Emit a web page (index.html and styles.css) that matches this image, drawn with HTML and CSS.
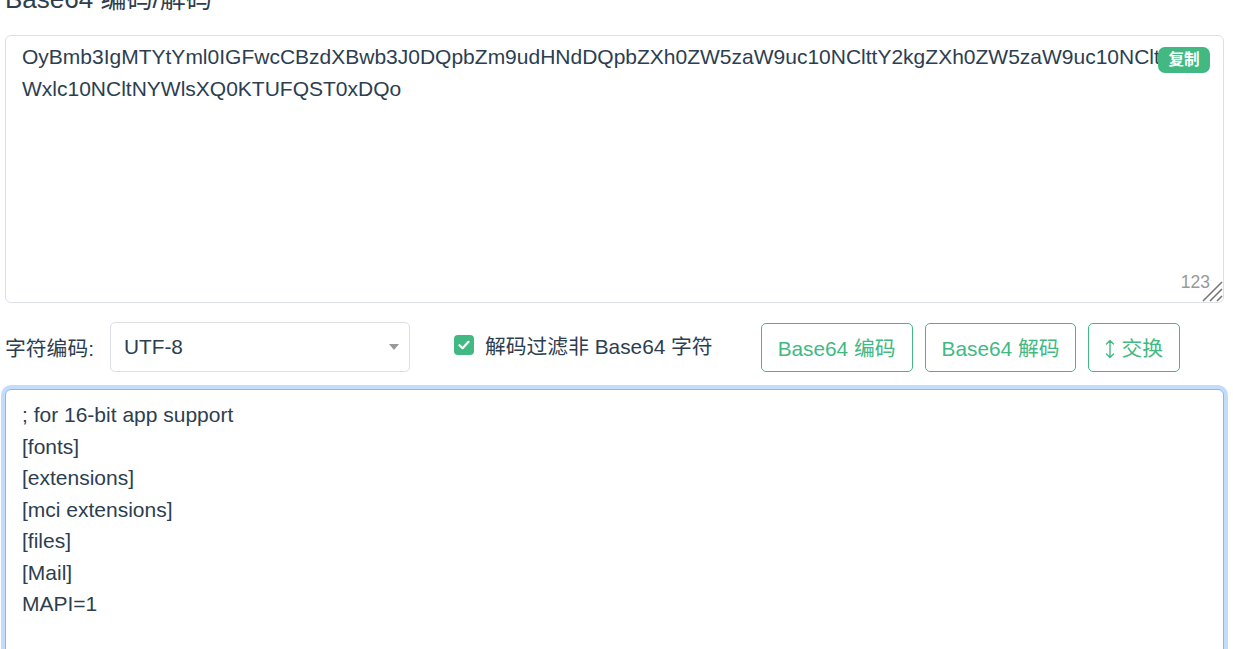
FILE: index.html
```html
<!DOCTYPE html>
<html lang="zh-CN">
<head>
    <meta charset="UTF-8">
    <meta name="viewport" content="width=device-width, initial-scale=1.0">
    <title>Base64 编码/解码</title>
    <link rel="stylesheet" href="styles.css">
</head>
<body>
    <div class="page">
        <h1 class="title">Base64 编码/解码</h1>

        <div class="box">
            <textarea class="text-in" spellcheck="false">OyBmb3IgMTYtYml0IGFwcCBzdXBwb3J0DQpbZm9udHNdDQpbZXh0ZW5zaW9uc10NClttY2kgZXh0ZW5zaW9uc10NCltmaWxlc10NCltNYWlsXQ0KTUFQST0xDQo</textarea>
            <span class="copy">复制</span>
            <span class="count">123</span>
            <svg class="grip" width="22" height="22" viewBox="0 0 22 22"><path d="M21 2 2 21M21 9 9 21M21 16 16 21" stroke="#777" stroke-width="1.6"/></svg>
        </div>

        <div class="toolbar">
            <span class="field-label">字符编码:</span>
            <div class="select">
                <span>UTF-8</span>
                <i class="caret"></i>
            </div>
            <label class="check">
                <span class="check-box">
                    <svg width="12" height="10" viewBox="0 0 12 10"><path d="M1.5 5.2 4.6 8.2 10.5 1.8" fill="none" stroke="#fff" stroke-width="2.2" stroke-linecap="round" stroke-linejoin="round"/></svg>
                </span>
                解码过滤非 Base64 字符
            </label>
            <div class="btns">
                <button class="btn">Base64 编码</button>
                <button class="btn">Base64 解码</button>
                <button class="btn">
                    <svg class="swap" width="10" height="20" viewBox="0 0 10 20"><path d="M5 1.5v17M1.5 5 5 1.5 8.5 5M1.5 15 5 18.5 8.5 15" fill="none" stroke="#42b983" stroke-width="1.4" stroke-linecap="round" stroke-linejoin="round"/></svg>
                    交换
                </button>
            </div>
        </div>

        <textarea class="text-out focused" spellcheck="false">; for 16-bit app support
[fonts]
[extensions]
[mci extensions]
[files]
[Mail]
MAPI=1
</textarea>
    </div>
</body>
</html>
```

FILE: styles.css
```css
*{
    padding: 0;
    margin: 0;
    box-sizing: border-box;
}
body{
    font-family: "Liberation Sans", "Noto Sans CJK SC", sans-serif;
    color: #2c3e50;
    background-color: #fff;
    overflow: hidden;
}
.page{
    margin-top: -20px;
    padding: 0 9px 0 5px;
}
.title{
    font-size: 26px;
    font-weight: normal;
    line-height: 1.5;
    margin-bottom: 16px;
}
.box{
    position: relative;
}
textarea{
    display: block;
    width: 100%;
    font-family: "Liberation Sans", "Noto Sans CJK SC", sans-serif;
    font-size: 21px;
    line-height: 31.5px;
    color: #2c3e50;
    border: 1px solid #dcdfe6;
    border-radius: 6px;
    outline: none;
    resize: none;
}
.text-in{
    height: 268px;
    padding: 5px 16px;
}
.copy{
    position: absolute;
    top: 12px;
    right: 14px;
    width: 52px;
    height: 26px;
    line-height: 26px;
    text-align: center;
    background-color: #42b983;
    color: #fff;
    font-size: 15.6px;
    font-weight: bold;
    border-radius: 7px;
}
.count{
    position: absolute;
    right: 14px;
    bottom: 12px;
    font-size: 17.5px;
    line-height: 1;
    color: #999;
}
.grip{
    position: absolute;
    right: 1px;
    bottom: 1px;
}
.toolbar{
    display: flex;
    align-items: center;
    margin-top: 19px;
    height: 50px;
    font-size: 20.8px;
}
.field-label{
    margin-right: 16px;
}
.select{
    width: 300px;
    height: 50px;
    border: 1px solid #dcdfe6;
    border-radius: 5px;
    display: flex;
    align-items: center;
    padding: 0 10px 0 13px;
}
.caret{
    margin-left: auto;
    width: 0;
    height: 0;
    border-top: 6px solid #999;
    border-left: 5px solid transparent;
    border-right: 5px solid transparent;
}
.check{
    display: flex;
    align-items: center;
    margin-left: 44px;
    margin-top: -4px;
}
.check-box{
    width: 20px;
    height: 20px;
    border-radius: 4px;
    background-color: #42b983;
    display: flex;
    justify-content: center;
    align-items: center;
    margin-right: 11px;
}
.btns{
    display: flex;
    gap: 12px;
    margin-left: 48px;
}
.btn{
    height: 49px;
    padding: 0 16px;
    border: 1px solid #42b983;
    border-radius: 5px;
    background-color: #fff;
    color: #42b983;
    font-family: "Liberation Sans", "Noto Sans CJK SC", sans-serif;
    font-size: 20.8px;
    display: flex;
    align-items: center;
}
.swap{
    margin-right: 6px;
    margin-top: 4px;
}
.text-out{
    margin-top: 17px;
    height: 320px;
    padding: 9px 16px;
}
.text-out.focused{
    border-color: #8ab6f4;
    box-shadow: 0 0 0 4px #c4dcfc;
}
```
